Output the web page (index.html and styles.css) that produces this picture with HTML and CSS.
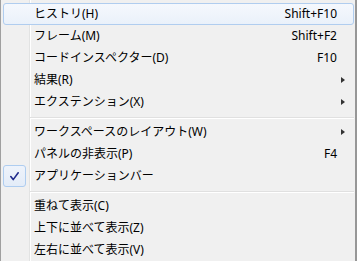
FILE: index.html
```html
<!DOCTYPE html>
<html lang="ja">
<head>
<meta charset="utf-8">
<link rel="stylesheet" href="styles.css">
</head>
<body>
<div class="menu">
  <div class="item hot"><span class="icon"></span><span class="label">ヒストリ(H)</span><span class="key">Shift+F10</span><span class="sub"></span></div>
  <div class="item"><span class="icon"></span><span class="label">フレーム(M)</span><span class="key">Shift+F2</span><span class="sub"></span></div>
  <div class="item"><span class="icon"></span><span class="label">コードインスペクター(D)</span><span class="key">F10</span><span class="sub"></span></div>
  <div class="item"><span class="icon"></span><span class="label">結果(R)</span><span class="key"></span><span class="sub"><span class="arrow"></span></span></div>
  <div class="item"><span class="icon"></span><span class="label">エクステンション(X)</span><span class="key"></span><span class="sub"><span class="arrow"></span></span></div>
  <div class="sep"><div class="line"></div></div>
  <div class="item"><span class="icon"></span><span class="label">ワークスペースのレイアウト(W)</span><span class="key"></span><span class="sub"><span class="arrow"></span></span></div>
  <div class="item"><span class="icon"></span><span class="label">パネルの非表示(P)</span><span class="key">F4</span><span class="sub"></span></div>
  <div class="item"><span class="icon checked"><svg width="9" height="9" viewBox="0 0 9 9"><path d="M0.8 4.6 L3.2 7.6 L8.2 0.8" fill="none" stroke="#1f2a8c" stroke-width="1.6" stroke-linecap="round" stroke-linejoin="round"/></svg></span><span class="label">アプリケーションバー</span><span class="key"></span><span class="sub"></span></div>
  <div class="sep"><div class="line"></div></div>
  <div class="item"><span class="icon"></span><span class="label">重ねて表示(C)</span><span class="key"></span><span class="sub"></span></div>
  <div class="item"><span class="icon"></span><span class="label">上下に並べて表示(Z)</span><span class="key"></span><span class="sub"></span></div>
  <div class="item"><span class="icon"></span><span class="label">左右に並べて表示(V)</span><span class="key"></span><span class="sub"></span></div>
</div>
</body>
</html>
```
FILE: styles.css
```css
html, body {
  margin: 0;
  padding: 0;
  background: #f0f0f0;
}
.menu {
  width: 357px;
  height: 261px;
  box-sizing: border-box;
  border-left: 1px solid #a0a0a0;
  border-right: 2px solid #979797;
  padding-top: 3px;
  overflow: hidden;
  background:
    linear-gradient(to right, transparent 28px, #e2e3e3 28px, #e2e3e3 29px, #ffffff 29px, #ffffff 30px, transparent 30px),
    #f0f0f0;
  font-family: "Noto Sans", "Noto Sans CJK JP", sans-serif;
  font-size: 12px;
  line-height: 20px;
  color: #000;
}
.item {
  display: flex;
  align-items: center;
  height: 22px;
  margin: 0 1px 0 2px;
  box-sizing: border-box;
  border: 1px solid transparent;
  border-radius: 3px;
}
.item.hot {
  border-color: #b0cdef;
  background: linear-gradient(#f5f8fd, #eaf1fa);
}
.icon {
  flex: none;
  display: flex;
  align-items: center;
  justify-content: center;
  box-sizing: border-box;
  margin: -1px 0 -1px -1px;
  height: 22px;
  width: 23px;
}
.icon.checked {
  border: 1px solid #aecdf0;
  border-radius: 3px;
  background: linear-gradient(#eef3fb, #e3ecf8);
}
.label {
  flex: 1;
  padding-left: 8px;
  white-space: nowrap;
  margin-top: -1px;
}
.key {
  flex: none;
  white-space: nowrap;
  margin-top: -1px;
}
.sub {
  flex: none;
  width: 16px;
  height: 20px;
  display: flex;
  align-items: center;
  padding-left: 4px;
  box-sizing: border-box;
}
.arrow {
  width: 0;
  height: 0;
  border-top: 3.5px solid transparent;
  border-bottom: 3.5px solid transparent;
  border-left: 4px solid #333;
}
.sep {
  height: 8px;
  box-sizing: border-box;
  padding-top: 4px;
  margin: 0 1px 0 29px;
}
.line {
  height: 1px;
  background: #e0e0e0;
  border-bottom: 1px solid #ffffff;
}
```
